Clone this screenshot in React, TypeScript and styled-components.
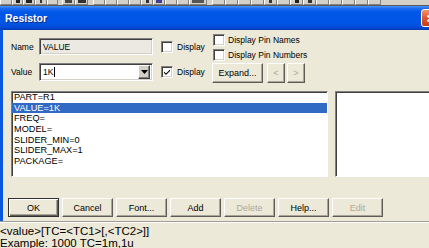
import React from "react";
import styled, { createGlobalStyle } from "styled-components";

const Global = createGlobalStyle`
  html, body { margin: 0; padding: 0; background: #ece9d8; }
  body { font-family: "Liberation Sans", Arial, sans-serif; }
`;

const Screen = styled.div`
  width: 429px;
  height: 248px;
  overflow: hidden;
  display: flex;
  flex-direction: column;
  background: #ece9d8;
  font-size: 8.5px;
  color: #000;
`;

const Toolbar = styled.div`
  height: 5px;
  flex: none;
  display: flex;
  background: #d4d0c8;
  border-bottom: 1px solid #5a5a5a;
  overflow: hidden;
`;

const ToolCell = styled.div<{ $w: number }>`
  width: ${(p) => p.$w}px;
  flex: none;
  height: 5px;
  box-sizing: border-box;
  border-left: 1px solid #ffffff;
  border-right: 1px solid #808080;
  border-bottom: 1px solid #808080;
  display: flex;
  justify-content: center;
`;

const ToolGap = styled.div<{ $w: number }>`
  width: ${(p) => p.$w}px;
  flex: none;
`;

const ToolIcon = styled.div<{ $w: number; $c: string }>`
  width: ${(p) => p.$w}px;
  height: 3px;
  background: ${(p) => p.$c};
`;

const TitleBar = styled.div`
  height: 24px;
  flex: none;
  display: flex;
  align-items: center;
  padding-left: 5px;
  background: linear-gradient(
    to bottom,
    #4a94f8 0%,
    #1e6cf0 10%,
    #0058e8 25%,
    #0054e3 75%,
    #0046d2 92%,
    #0038b0 100%
  );
`;

const Title = styled.span`
  flex: 1;
  color: #ffffff;
  font: bold 10.5px "Liberation Sans", Arial, sans-serif;
  text-shadow: 1px 1px 0 #0a2a80;
`;

const CloseBtn = styled.div`
  width: 19px;
  height: 18px;
  flex: none;
  margin-right: -11px;
  box-sizing: border-box;
  border: 1px solid #ffffff;
  border-radius: 3px;
  background: linear-gradient(#f39070, #e0582d 50%, #c53c12);
  display: flex;
  align-items: center;
  justify-content: center;
`;

const Body = styled.div`
  height: 191px;
  flex: none;
  display: flex;
`;

const Frame = styled.div`
  width: 3px;
  flex: none;
  background: #0a58e0;
`;

const Dialog = styled.div`
  flex: 1;
  min-width: 0;
  display: flex;
  flex-direction: column;
  padding-top: 4px;
`;

const TopSection = styled.div`
  height: 57px;
  flex: none;
  display: flex;
  align-items: flex-start;
  padding-left: 8px;
`;

const LeftCol = styled.div`
  width: 201px;
  flex: none;
  display: flex;
  flex-direction: column;
  gap: 8px;
  margin-top: 4px;
`;

const FieldRow = styled.div<{ $h: number }>`
  height: ${(p) => p.$h}px;
  display: flex;
  align-items: center;
`;

const Label = styled.span`
  width: 28px;
  flex: none;
`;

const Sunken = styled.div<{ $bg: string }>`
  box-sizing: border-box;
  border: 1px solid;
  border-color: #808080 #ffffff #ffffff #808080;
  box-shadow: inset 1px 1px 0 #404040, inset -1px -1px 0 #d4d0c8;
  background: ${(p) => p.$bg};
`;

const TextBox = styled(Sunken)`
  width: 114px;
  height: 100%;
  display: flex;
  align-items: center;
  padding-left: 3px;
  padding-right: 2px;
`;

const FieldText = styled.span`
  flex: 1;
  display: flex;
  align-items: center;
`;

const Caret = styled.span`
  width: 1px;
  height: 10px;
  background: #000;
  margin-left: 1px;
`;

const DropBtn = styled.div`
  width: 12px;
  height: 14px;
  flex: none;
  box-sizing: border-box;
  background: #d4d0c8;
  border: 1px solid;
  border-color: #ffffff #404040 #404040 #ffffff;
  box-shadow: inset -1px -1px 0 #808080;
  display: flex;
  align-items: center;
  justify-content: center;
`;

const Check = styled.span<{ $ml: number }>`
  display: flex;
  align-items: center;
  margin-left: ${(p) => p.$ml}px;
`;

const CheckBox = styled(Sunken)`
  width: 12px;
  height: 12px;
  flex: none;
  display: flex;
  align-items: center;
  justify-content: center;
`;

const CheckText = styled.span<{ $ml: number }>`
  margin-left: ${(p) => p.$ml}px;
  white-space: nowrap;
`;

const RightCol = styled.div`
  display: flex;
  flex-direction: column;
  gap: 4px;
  margin-left: 1px;
`;

const RightCheckRow = styled.div`
  height: 11px;
  display: flex;
  align-items: center;
`;

const SmallBtnRow = styled.div`
  display: flex;
  margin-top: -1px;
  margin-left: -1px;
`;

const Button = styled.div<{ $w: number; $h: number; $disabled?: boolean; $default?: boolean; $ml?: number }>`
  width: ${(p) => p.$w}px;
  height: ${(p) => p.$h}px;
  margin-left: ${(p) => p.$ml ?? 0}px;
  flex: none;
  box-sizing: border-box;
  background: #ece9d8;
  border: 1px solid;
  border-color: ${(p) => (p.$default ? "#303030" : "#ffffff #5e5c54 #5e5c54 #ffffff")};
  box-shadow: ${(p) =>
    p.$default
      ? "inset 1px 1px 0 #ffffff, inset -1px -1px 0 #5e5c54, inset -2px -2px 0 #a8a69a"
      : "inset -1px -1px 0 #a8a69a"};
  color: ${(p) => (p.$disabled ? "#aca899" : "#000")};
  display: flex;
  align-items: center;
  justify-content: center;
  font-size: 9px;
`;

const ListRow = styled.div`
  height: 86px;
  flex: none;
  display: flex;
  padding-left: 8px;
  gap: 7px;
`;

const ListBox = styled.div`
  width: 317px;
  flex: none;
  box-sizing: border-box;
  background: #ffffff;
  border: 1px solid;
  border-color: #808080 #ffffff #ffffff #808080;
  box-shadow: inset 1px 1px 0 #404040;
  display: flex;
  flex-direction: column;
  overflow: hidden;
`;

const ListItem = styled.div<{ $selected?: boolean }>`
  height: 10.7px;
  line-height: 10.7px;
  padding-left: 2px;
  font-size: 9.2px;
  background: ${(p) => (p.$selected ? "#316ac5" : "transparent")};
  color: ${(p) => (p.$selected ? "#ffffff" : "#000")};
  white-space: nowrap;
`;

const PreviewBox = styled.div`
  flex: 1;
  margin-right: -10px;
  box-sizing: border-box;
  background: #ffffff;
  border: 1px solid;
  border-color: #808080 #ffffff #ffffff #808080;
  box-shadow: inset 1px 1px 0 #404040;
`;

const ButtonRow = styled.div`
  display: flex;
  gap: 3px;
  margin-top: 21px;
  padding-left: 5px;
`;

const Separator = styled.div`
  height: 1px;
  flex: none;
  background: #a09e94;
  border-bottom: 1px solid #ffffff;
`;

const HelpText = styled.div`
  font-size: 11.5px;
  line-height: 12px;
  padding-top: 2px;
  white-space: nowrap;
`;

const toolCells: Array<{ w: number; gap?: number; icon?: { w: number; c: string } }> = [
  { w: 12 }, { w: 11, icon: { w: 4, c: "#222" } }, { w: 12, icon: { w: 6, c: "#222" } },
  { w: 12, icon: { w: 2, c: "#333" } }, { w: 11, gap: 4 }, { w: 13, icon: { w: 7, c: "#444" } },
  { w: 13, icon: { w: 8, c: "#333" }, gap: 5 }, { w: 12 }, { w: 12 }, { w: 12 }, { w: 12 },
  { w: 12, icon: { w: 3, c: "#333" } }, { w: 12, icon: { w: 6, c: "#404090" } }, { w: 12 },
  { w: 12 }, { w: 18, icon: { w: 12, c: "#555" }, gap: 5 }, { w: 13 }, { w: 13 }, { w: 13 },
  { w: 13 }, { w: 13, icon: { w: 3, c: "#333" } }, { w: 13 }, { w: 13, icon: { w: 4, c: "#222" } },
  { w: 13, icon: { w: 4, c: "#333" } }, { w: 13 }, { w: 13 }, { w: 13 }, { w: 13 }, { w: 13 },
];

const listItems = ["PART=R1", "VALUE=1K", "FREQ=", "MODEL=", "SLIDER_MIN=0", "SLIDER_MAX=1", "PACKAGE="];

const CheckMark = () => (
  <svg width="8" height="8" viewBox="0 0 8 8">
    <path d="M1 3.5 L3 5.5 L7 1.5 L7 3 L3 7 L1 5 Z" fill="#000" />
  </svg>
);

export default function App() {
  return (
    <Screen>
      <Global />
      <Toolbar>
        {toolCells.map((c, i) => (
          <React.Fragment key={i}>
            <ToolCell $w={c.w}>{c.icon && <ToolIcon $w={c.icon.w} $c={c.icon.c} />}</ToolCell>
            {c.gap ? <ToolGap $w={c.gap} /> : null}
          </React.Fragment>
        ))}
      </Toolbar>
      <TitleBar>
        <Title>Resistor</Title>
        <CloseBtn>
          <svg width="9" height="9" viewBox="0 0 9 9">
            <path d="M1.5 1.5 L7.5 7.5 M7.5 1.5 L1.5 7.5" stroke="#fff" strokeWidth="1.8" />
          </svg>
        </CloseBtn>
      </TitleBar>
      <Body>
        <Frame />
        <Dialog>
          <TopSection>
            <LeftCol>
              <FieldRow $h={17}>
                <Label>Name</Label>
                <TextBox $bg="#ebe9e1">
                  <FieldText>VALUE</FieldText>
                </TextBox>
                <Check $ml={8}>
                  <CheckBox $bg="#ffffff" />
                  <CheckText $ml={4}>Display</CheckText>
                </Check>
              </FieldRow>
              <FieldRow $h={18}>
                <Label>Value</Label>
                <TextBox $bg="#ffffff">
                  <FieldText>
                    1K
                    <Caret />
                  </FieldText>
                  <DropBtn>
                    <svg width="7" height="4" viewBox="0 0 7 4">
                      <path d="M0 0 H7 L3.5 4 Z" fill="#000" />
                    </svg>
                  </DropBtn>
                </TextBox>
                <Check $ml={8}>
                  <CheckBox $bg="#ffffff">
                    <CheckMark />
                  </CheckBox>
                  <CheckText $ml={4}>Display</CheckText>
                </Check>
              </FieldRow>
            </LeftCol>
            <RightCol>
              <RightCheckRow>
                <CheckBox $bg="#ffffff" />
                <CheckText $ml={3}>Display Pin Names</CheckText>
              </RightCheckRow>
              <RightCheckRow>
                <CheckBox $bg="#ffffff" />
                <CheckText $ml={3}>Display Pin Numbers</CheckText>
              </RightCheckRow>
              <SmallBtnRow>
                <Button $w={51} $h={20}>Expand...</Button>
                <Button $w={18} $h={20} $ml={4} $disabled>&lt;</Button>
                <Button $w={18} $h={20} $ml={2} $disabled>&gt;</Button>
              </SmallBtnRow>
            </RightCol>
          </TopSection>
          <ListRow>
            <ListBox>
              {listItems.map((t, i) => (
                <ListItem key={t} $selected={i === 1}>
                  {t}
                </ListItem>
              ))}
            </ListBox>
            <PreviewBox />
          </ListRow>
          <ButtonRow>
            <Button $w={51} $h={19} $default>OK</Button>
            <Button $w={51} $h={19}>Cancel</Button>
            <Button $w={51} $h={19}>Font...</Button>
            <Button $w={51} $h={19}>Add</Button>
            <Button $w={51} $h={19} $disabled>Delete</Button>
            <Button $w={51} $h={19}>Help...</Button>
            <Button $w={51} $h={19} $disabled>Edit</Button>
          </ButtonRow>
        </Dialog>
      </Body>
      <Separator />
      <HelpText>
        &lt;value&gt;[TC=&lt;TC1&gt;[,&lt;TC2&gt;]]
        <br />
        Example: 1000 TC=1m,1u
      </HelpText>
    </Screen>
  );
}
